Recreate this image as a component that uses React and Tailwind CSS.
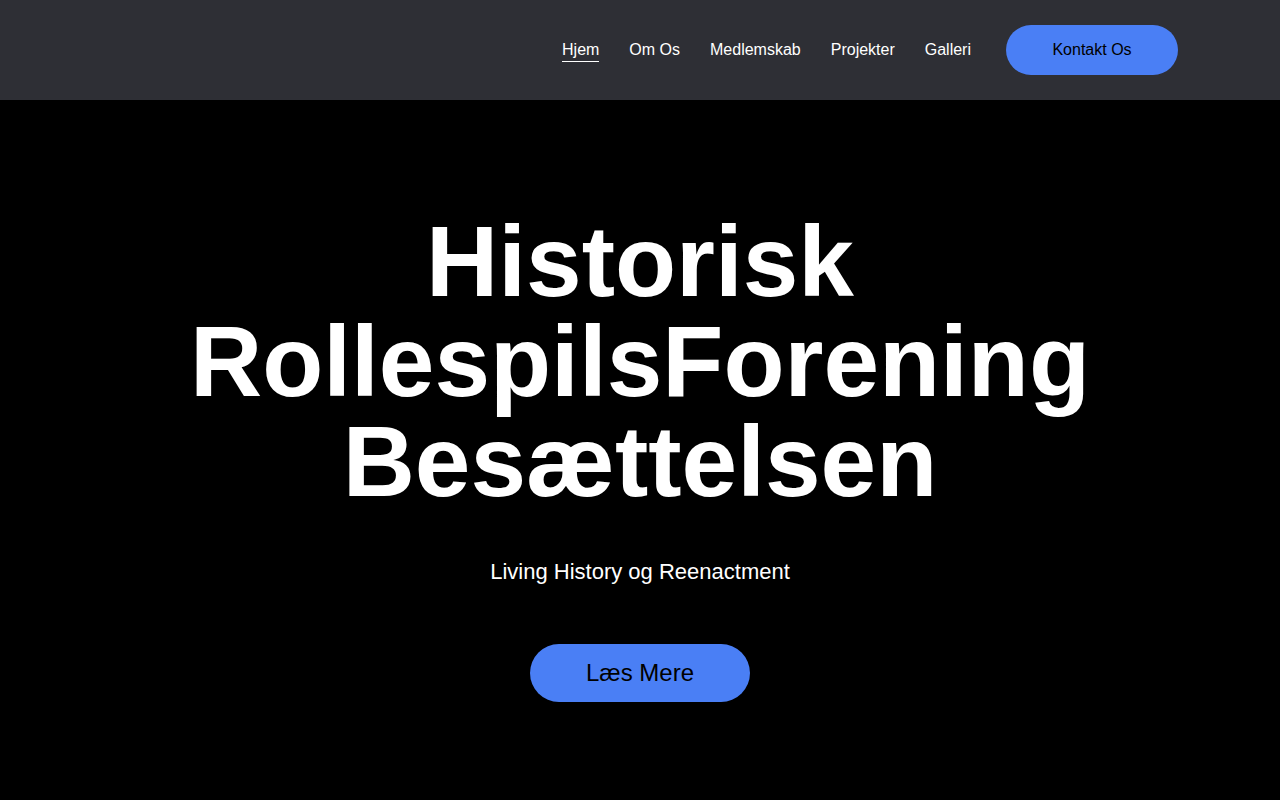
export default function App() {
  const links = ["Hjem", "Om Os", "Medlemskab", "Projekter", "Galleri"];
  return (
    <div className="min-h-[800px] bg-black" style={{ fontFamily: '"Liberation Sans", Arial, sans-serif' }}>
      <header className="h-[100px] bg-[#2e2f35] flex items-center justify-end pr-[102px]">
        <nav className="flex items-center gap-[30px]">
          {links.map((l, i) => (
            <a
              key={l}
              className={`text-white text-base leading-5 pt-[2px] pb-[1px] border-b ${i === 0 ? "border-white" : "border-transparent"}`}
            >
              {l}
            </a>
          ))}
        </nav>
        <button className="ml-[35px] w-[172px] h-[50px] rounded-full bg-[#4a7ff5] text-black text-base">Kontakt Os</button>
      </header>
      <section className="flex flex-col items-center pt-[111px]">
        <h1 className="text-white font-bold text-[100px] leading-[100px] text-center">
          Historisk<br />RollespilsForening<br />Besættelsen
        </h1>
        <p className="text-white text-[22px] mt-[44px]">Living History og Reenactment</p>
        <button className="mt-[56px] w-[220px] h-[58px] rounded-full bg-[#4a7ff5] text-black text-[24px]">Læs Mere</button>
      </section>
    </div>
  );
}
